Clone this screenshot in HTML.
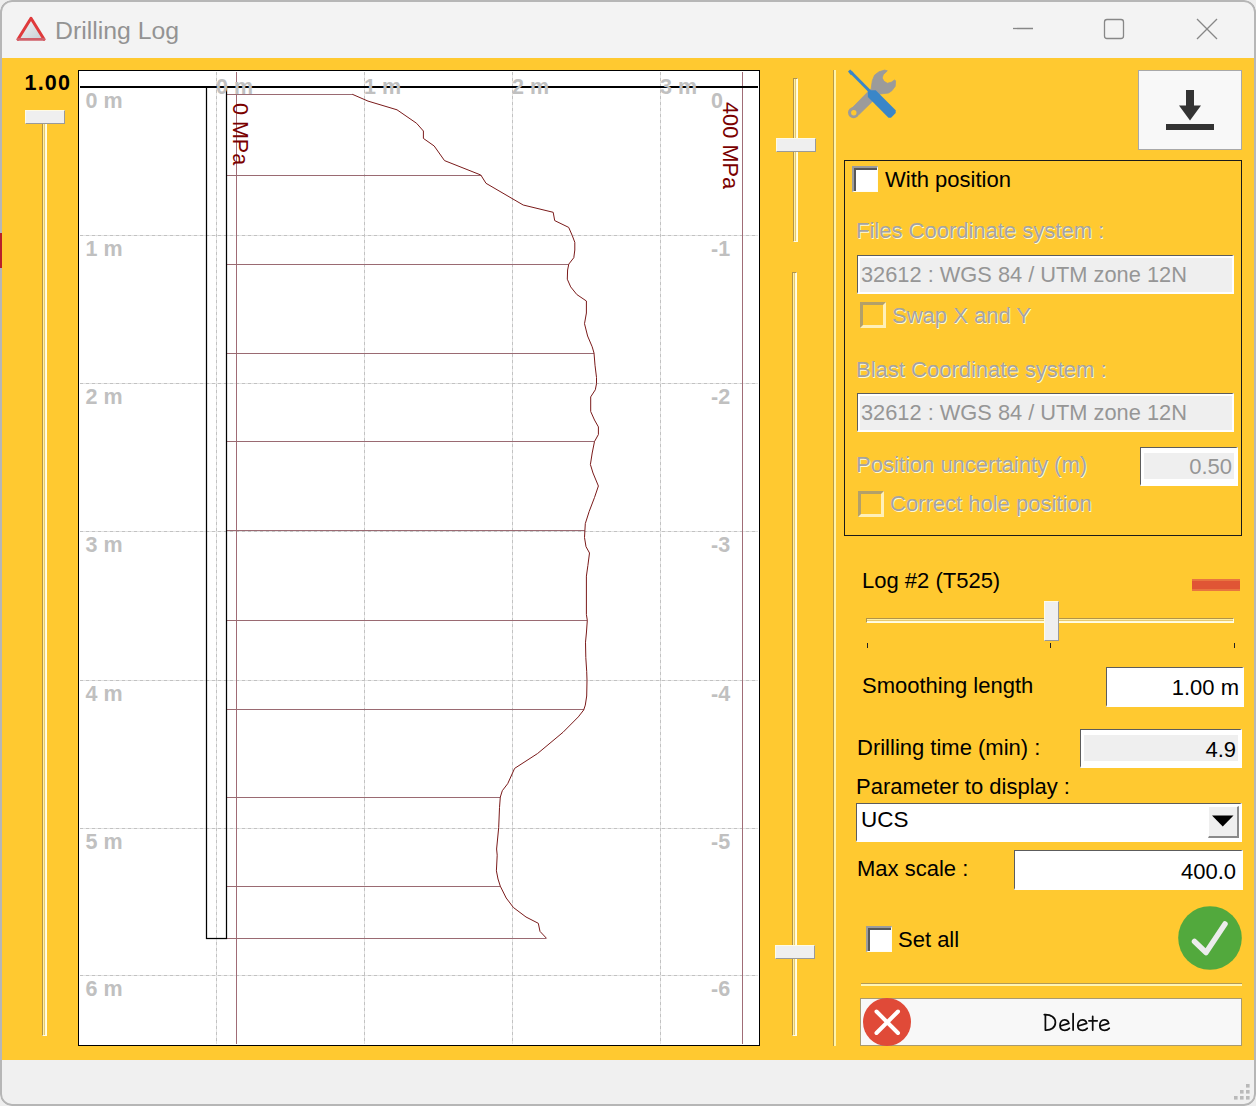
<!DOCTYPE html>
<html>
<head>
<meta charset="utf-8">
<style>
html,body{margin:0;padding:0;width:1256px;height:1106px;overflow:hidden;background:#eeeeee;}
*{box-sizing:border-box;}
body{font-family:"Liberation Sans",sans-serif;position:relative;}
.abs{position:absolute;}
#win{position:absolute;left:0;top:0;width:1256px;height:1106px;border-radius:12px;overflow:hidden;background:#f3f3f3;}
#frame{position:absolute;left:0;top:0;width:1256px;height:1106px;border:2px solid #b6b6b6;border-radius:12px;}
#title{position:absolute;left:0;top:0;width:1256px;height:58px;background:#f3f3f3;}
#body{position:absolute;left:0;top:58px;width:1256px;height:1002px;background:#ffc930;}
#status{position:absolute;left:0;top:1060px;width:1256px;height:46px;background:#f0f0f0;}
.t{position:absolute;white-space:nowrap;font-size:22px;line-height:1;color:#000;}
.dis{color:#a3a3a3;text-shadow:1px 1px 0 #fff8d8;}
.gl{position:absolute;white-space:nowrap;font-size:21.5px;font-weight:bold;color:#c0c0c0;line-height:1;}
.tb{position:absolute;background:#fff;border-top:1px solid #5c5c5c;border-left:1px solid #5c5c5c;border-bottom:2px solid #fff;border-right:2px solid #fff;box-shadow:inset 2px 2px 0 #fff;}
.cb{position:absolute;width:26px;height:26px;background:#fff;border-top:2px solid #9c9c9c;border-left:2px solid #9c9c9c;border-right:1px solid #fffef5;border-bottom:1px solid #fffef5;box-shadow:inset 2px 2px 0 #585858;}
.cbd{position:absolute;width:26px;height:26px;background:transparent;border-top:3px solid #b3a069;border-left:3px solid #b3a069;border-right:3px solid #fff0b8;border-bottom:3px solid #fff0b8;}
.trk{position:absolute;background:linear-gradient(to right,#fff0a0 0,#fff0a0 45%,#e6c870 45%,#e6c870 70%,#fffbd8 70%);border-left:1px solid #b0934a;border-top:1px solid #b0934a;border-right:1px solid #fffde8;border-bottom:1px solid #fffde8;}
.trkh{position:absolute;background:linear-gradient(to bottom,#fff0a0 0,#fff0a0 45%,#e6c870 45%,#e6c870 70%,#fffbd8 70%);border-left:1px solid #b0934a;border-top:1px solid #b0934a;border-right:1px solid #fffde8;border-bottom:1px solid #fffde8;}
.thumb{position:absolute;background:#efefef;border-top:1px solid #fffbe5;border-left:1px solid #fffbe5;border-right:1px solid #9a9a9a;border-bottom:1px solid #9a9a9a;}
</style>
</head>
<body>
<div id="win">
  <div id="title">
    <svg class="abs" style="left:0;top:0" width="60" height="58">
      <defs><linearGradient id="tg" x1="0" y1="0" x2="1" y2="1"><stop offset="0" stop-color="#f4f8fa"/><stop offset="1" stop-color="#c7ced3"/></linearGradient></defs>
      <path d="M31,18.3 L44,39.3 L18,39.3 Z" fill="url(#tg)" stroke="none"/><path d="M18,39.3 L31,18.3 L44,39.3" fill="none" stroke="#df3a3c" stroke-width="3" stroke-linejoin="round" stroke-linecap="round"/><line x1="18" y1="39.4" x2="44" y2="39.4" stroke="#d0606a" stroke-width="2.6" stroke-linecap="round"/>
    </svg>
    <div class="t" style="left:55px;top:18.5px;font-size:24.8px;color:#939393;">Drilling Log</div>
    <svg class="abs" style="left:1000px;top:0" width="256" height="58">
      <g stroke="#878787" stroke-width="1.3" fill="none">
        <line x1="13" y1="28.5" x2="33" y2="28.5"/>
        <rect x="104.5" y="19.5" width="19" height="19" rx="2.5"/>
        <line x1="197" y1="19" x2="217" y2="39"/>
        <line x1="217" y1="19" x2="197" y2="39"/>
      </g>
    </svg>
  </div>
  <div id="body"></div>
  <div id="status">
    <svg class="abs" style="left:1230px;top:20px" width="24" height="24">
      <g fill="#b9b9b9">
        <rect x="16" y="4" width="3.6" height="3.6"/>
        <rect x="10" y="10" width="3.6" height="3.6"/><rect x="16" y="10" width="3.6" height="3.6"/>
        <rect x="4" y="16" width="3.6" height="3.6"/><rect x="10" y="16" width="3.6" height="3.6"/><rect x="16" y="16" width="3.6" height="3.6"/>
      </g>
    </svg>
  </div>

  <!-- left slider -->
  <div class="t" style="left:24.5px;top:73px;font-weight:bold;font-size:21.5px;letter-spacing:1.2px;">1.00</div>
  <div class="trk" style="left:42px;top:123px;width:5px;height:913px;"></div>
  <div class="thumb" style="left:25px;top:110px;width:40px;height:14px;"></div>

  <!-- chart -->
  <div class="abs" style="left:78px;top:70px;width:682px;height:976px;background:#fff;border:1px solid #000;"></div>
  <svg class="abs" style="left:0;top:0" width="1256" height="1106">
    <g stroke="#e3e3e3" stroke-width="1"><line x1="80" y1="235.5" x2="758" y2="235.5"/><line x1="80" y1="383.5" x2="758" y2="383.5"/><line x1="80" y1="531.5" x2="758" y2="531.5"/><line x1="80" y1="680.5" x2="758" y2="680.5"/><line x1="80" y1="828.5" x2="758" y2="828.5"/><line x1="80" y1="975.5" x2="758" y2="975.5"/><line x1="216.5" y1="72" x2="216.5" y2="1044"/><line x1="364.5" y1="72" x2="364.5" y2="1044"/><line x1="512.5" y1="72" x2="512.5" y2="1044"/><line x1="660.5" y1="72" x2="660.5" y2="1044"/></g><g stroke="#c2c2c2" stroke-width="1" stroke-dasharray="3,3"><line x1="80" y1="235.5" x2="758" y2="235.5"/><line x1="80" y1="383.5" x2="758" y2="383.5"/><line x1="80" y1="531.5" x2="758" y2="531.5"/><line x1="80" y1="680.5" x2="758" y2="680.5"/><line x1="80" y1="828.5" x2="758" y2="828.5"/><line x1="80" y1="975.5" x2="758" y2="975.5"/><line x1="216.5" y1="72" x2="216.5" y2="1044"/><line x1="364.5" y1="72" x2="364.5" y2="1044"/><line x1="512.5" y1="72" x2="512.5" y2="1044"/><line x1="660.5" y1="72" x2="660.5" y2="1044"/></g>
    <line x1="236.5" y1="72" x2="236.5" y2="1044" stroke="#a06c76" stroke-width="1"/>
    <line x1="742.5" y1="72" x2="742.5" y2="1044" stroke="#a06c76" stroke-width="1"/>
    <g stroke="#9a6a72" stroke-width="1"><line x1="226" y1="94.5" x2="352.9" y2="94.5"/><line x1="226" y1="175.5" x2="481.1" y2="175.5"/><line x1="226" y1="264.5" x2="568.7" y2="264.5"/><line x1="226" y1="353.5" x2="594.0" y2="353.5"/><line x1="226" y1="441.5" x2="594.5" y2="441.5"/><line x1="226" y1="530.5" x2="584.9" y2="530.5"/><line x1="226" y1="620.5" x2="587.3" y2="620.5"/><line x1="226" y1="709.5" x2="583.9" y2="709.5"/><line x1="226" y1="797.5" x2="500.3" y2="797.5"/><line x1="226" y1="886.5" x2="500.4" y2="886.5"/><line x1="226" y1="938.5" x2="546.4" y2="938.5"/></g>
    <polyline points="352.4,94.3 368.0,101.1 397.0,109.8 416.6,123.3 423.4,131.0 423.4,138.4 434.2,146.0 444.5,160.6 480.8,175.0 486.0,183.3 523.2,205.0 553.2,212.3 554.7,220.6 568.7,227.4 572.2,235.4 574.8,242.3 574.8,250.0 573.8,257.7 568.8,264.1 567.6,270.0 567.3,279.2 570.7,286.9 576.8,294.5 586.4,301.0 586.4,313.0 584.5,323.7 587.6,336.0 592.2,346.8 594.0,353.0 595.0,365.2 596.5,377.5 596.5,383.7 595.3,389.8 590.7,396.9 590.7,411.5 594.5,420.0 598.4,426.9 598.4,434.5 594.5,441.5 592.2,453.0 590.4,464.5 593.0,473.0 598.4,486.0 594.5,497.5 589.2,511.4 585.3,523.6 584.9,530.6 584.5,537.5 586.0,546.7 589.5,553.0 587.9,565.4 586.4,576.1 586.4,614.5 587.3,620.4 586.4,633.0 585.5,642.2 585.8,657.5 586.7,671.4 587.0,680.3 586.7,696.0 585.3,705.1 583.7,710.0 578.3,716.9 563.0,732.3 537.6,753.5 514.6,768.4 507.7,783.7 502.3,790.7 500.3,797.1 499.5,807.6 498.7,827.5 496.6,849.0 497.2,855.2 496.4,870.8 498.0,879.0 500.3,886.2 506.2,898.0 513.4,907.5 526.0,917.0 538.3,923.3 540.0,931.4 546.4,938.2" fill="none" stroke="#7a1a1a" stroke-width="1" stroke-linejoin="round"/>
    <rect x="206.5" y="87" width="20" height="851.5" fill="none" stroke="#000" stroke-width="1.25"/>
    <line x1="80" y1="87" x2="758" y2="87" stroke="#000" stroke-width="2"/>
  </svg>
  <div class="gl" style="left:85.5px;top:90.5px">0 m</div><div class="gl" style="left:85.5px;top:238.5px">1 m</div><div class="gl" style="left:85.5px;top:386.5px">2 m</div><div class="gl" style="left:85.5px;top:534.5px">3 m</div><div class="gl" style="left:85.5px;top:683.5px">4 m</div><div class="gl" style="left:85.5px;top:831.5px">5 m</div><div class="gl" style="left:85.5px;top:978.5px">6 m</div>
  <div class="gl" style="left:711px;top:90.5px">0</div><div class="gl" style="left:711px;top:238.5px">-1</div><div class="gl" style="left:711px;top:386.5px">-2</div><div class="gl" style="left:711px;top:534.5px">-3</div><div class="gl" style="left:711px;top:683.5px">-4</div><div class="gl" style="left:711px;top:831.5px">-5</div><div class="gl" style="left:711px;top:978.5px">-6</div>
  <div class="gl" style="left:216px;top:76.5px">0 m</div><div class="gl" style="left:364px;top:76.5px">1 m</div><div class="gl" style="left:512px;top:76.5px">2 m</div><div class="gl" style="left:660px;top:76.5px">3 m</div>
  <div class="t" style="left:229px;top:103px;font-size:21.5px;color:#7a0000;transform-origin:0 0;transform:translate(21px,0) rotate(90deg);">0 MPa</div>
  <div class="t" style="left:719.5px;top:102px;font-size:21.8px;color:#7a0000;transform-origin:0 0;transform:translate(21px,0) rotate(90deg);">400 MPa</div>

  <!-- right sliders -->
  <div class="trk" style="left:793px;top:78px;width:5px;height:164px;"></div>
  <div class="thumb" style="left:776px;top:138px;width:40px;height:14px;"></div>
  <div class="trk" style="left:792px;top:272px;width:5px;height:764px;"></div>
  <div class="thumb" style="left:775px;top:945px;width:40px;height:14px;"></div>
  <div class="abs" style="left:833px;top:70px;width:3px;height:976px;border-left:1px solid #b89a45;background:#fff3a8;"></div>

  <!-- tools icon -->
  <svg class="abs" style="left:846px;top:68px" width="52" height="52" viewBox="0 0 52 52">
    <path d="M38.6,2.1 L41.3,2.8 L37.2,6.8 L36.2,10 L38,13.3 L41.4,15.3 L45.3,14.2 L48.6,12 L49.6,12.8 L49.2,18.3 L45.8,22.8 L42.5,25 L34,26 L13,46.5 L6,40 L25.2,20.5 L26.3,12.7 L28.6,7.1 L33,3.8 Z" fill="#9b9b9b" stroke="#9b9b9b" stroke-width="0.8" stroke-linejoin="round"/>
    <circle cx="7.6" cy="44.6" r="5.6" fill="#9b9b9b"/>
    <circle cx="7.8" cy="44.8" r="2.7" fill="#ffc930"/>
    <line x1="4.5" y1="3.8" x2="24" y2="23.5" stroke="#3a86c8" stroke-width="3"/>
    <path d="M2,3.6 L4.2,1.6 L7.4,4.8 L5,7.2 Z" fill="#3a86c8"/>
    <path d="M21.9,22.2 L29.7,22.2 L49.7,42.3 L49.7,45 L45,49.8 L42.5,49.8 L21.9,28.9 Z" fill="#3a86c8"/>
  </svg>

  <!-- download button -->
  <div class="abs" style="left:1138px;top:70px;width:104px;height:80px;background:#f8f8f8;border:1px solid #a8a8a8;"></div>
  <svg class="abs" style="left:1138px;top:70px" width="104" height="80">
    <rect x="48" y="20" width="8" height="17" fill="#333"/>
    <path d="M41,35.5 L63,35.5 L52,50.5 Z" fill="#333"/>
    <rect x="28" y="54" width="48" height="6" fill="#333"/>
  </svg>

  <!-- group box -->
  <div class="abs" style="left:844px;top:160px;width:398px;height:376px;border:1px solid #1a1a1a;"></div>
  <div class="cb" style="left:852px;top:166px;"></div>
  <div class="t" style="left:885px;top:169px;">With position</div>
  <div class="t dis" style="left:856px;top:220px;">Files Coordinate system :</div>
  <div class="tb" style="left:857px;top:255px;width:377px;height:39px;background:#efefef;"></div>
  <div class="t" style="left:861px;top:264px;color:#969696;font-size:21.8px;">32612 : WGS 84 / UTM zone 12N</div>
  <div class="cbd" style="left:860px;top:302px;"></div>
  <div class="t dis" style="left:892px;top:305px;">Swap X and Y</div>
  <div class="t dis" style="left:856px;top:359px;">Blast Coordinate system :</div>
  <div class="tb" style="left:857px;top:393px;width:377px;height:39px;background:#efefef;"></div>
  <div class="t" style="left:861px;top:402px;color:#969696;font-size:21.8px;">32612 : WGS 84 / UTM zone 12N</div>
  <div class="t dis" style="left:856px;top:454px;">Position uncertainty (m)</div>
  <div class="tb" style="left:1140px;top:447px;width:98px;height:39px;"></div>
  <div class="abs" style="left:1144px;top:453px;width:90px;height:26px;background:#efefef;"></div>
  <div class="t" style="left:1140px;top:456px;width:92px;text-align:right;color:#969696;">0.50</div>
  <div class="cbd" style="left:858px;top:491px;"></div>
  <div class="t dis" style="left:890px;top:493px;">Correct hole position</div>

  <!-- log slider -->
  <div class="t" style="left:862px;top:570px;">Log #2 (T525)</div>
  <div class="abs" style="left:1192px;top:579px;width:48px;height:12px;background:#e05535;border-top:2px solid #e8753f;border-bottom:2px solid #e8753f;"></div>
  <div class="trkh" style="left:866px;top:618px;width:368px;height:5px;"></div>
  <div class="thumb" style="left:1044px;top:601px;width:15px;height:40px;"></div>
  <div class="abs" style="left:867px;top:643px;width:1px;height:5px;background:#222;"></div>
  <div class="abs" style="left:1050px;top:643px;width:1px;height:5px;background:#222;"></div>
  <div class="abs" style="left:1234px;top:643px;width:1px;height:5px;background:#222;"></div>

  <div class="t" style="left:862px;top:675px;">Smoothing length</div>
  <div class="tb" style="left:1106px;top:667px;width:138px;height:40px;"></div>
  <div class="t" style="left:1106px;top:677px;width:133px;text-align:right;">1.00 m</div>

  <div class="t" style="left:857px;top:737px;">Drilling time (min) :</div>
  <div class="tb" style="left:1080px;top:729px;width:162px;height:39px;"></div>
  <div class="abs" style="left:1084px;top:735px;width:154px;height:26px;background:#efefef;"></div>
  <div class="t" style="left:1080px;top:739px;width:156px;text-align:right;">4.9</div>

  <div class="t" style="left:856px;top:776px;">Parameter to display :</div>
  <div class="tb" style="left:856px;top:803px;width:386px;height:39px;"></div>
  <div class="t" style="left:861px;top:809px;font-size:22.5px;">UCS</div>
  <div class="abs" style="left:1208px;top:806px;width:31px;height:32px;background:#efefef;border-top:1px solid #fff;border-left:1px solid #fff;border-right:2px solid #8a8a8a;border-bottom:2px solid #8a8a8a;"></div>
  <svg class="abs" style="left:1208px;top:806px" width="31" height="32"><path d="M4,9.5 L25.5,9.5 L14.75,20.5 Z" fill="#000"/></svg>

  <div class="t" style="left:857px;top:858px;">Max scale :</div>
  <div class="tb" style="left:1014px;top:850px;width:229px;height:40px;"></div>
  <div class="t" style="left:1014px;top:861px;width:222px;text-align:right;">400.0</div>

  <div class="cb" style="left:866px;top:926px;"></div>
  <div class="t" style="left:898px;top:929px;">Set all</div>
  <svg class="abs" style="left:1176px;top:904px" width="68" height="68">
    <circle cx="34" cy="34" r="31.8" fill="#52a93d"/>
    <path d="M18.5,37.5 L30,48.5 L49,20" fill="none" stroke="#ececec" stroke-width="5.5" stroke-linecap="round" stroke-linejoin="round"/>
  </svg>

  <div class="abs" style="left:861px;top:983px;width:381px;height:3px;border-top:1px solid #b39a55;background:#fff5b5;"></div>

  <div class="abs" style="left:860px;top:998px;width:382px;height:48px;background:#f8f8f8;border:1px solid #a89a70;"></div>
  <svg class="abs" style="left:860px;top:998px" width="60" height="48">
    <circle cx="27" cy="24" r="24" fill="#e04a38"/>
    <path d="M16.5,13.5 L38,35 M38,13.5 L16.5,35" stroke="#fff" stroke-width="4" stroke-linecap="round"/>
  </svg>
  <svg class="abs" style="left:0;top:0" width="1256" height="1106"><path d="M1045.4,1015.2 L1045.4,1030 M1044.3,1014.6 C1051.5,1014.2 1055.4,1018 1055.4,1022.4 C1055.4,1027.3 1051.2,1030.4 1045.4,1030.1 M1060.4,1026 L1068.8,1023.3 C1068.2,1020.6 1066.4,1019.9 1064.6,1019.9 C1061.6,1019.9 1060.0,1022.5 1060.0,1025.5 C1060.0,1028.6 1062.2,1030.3 1064.8,1030.3 C1066.8,1030.3 1068.3,1029.5 1069.4,1028.3 M1073.1,1013.6 L1073.1,1030.1 M1078.2,1026 L1086.6,1023.3 C1086.0,1020.6 1084.2,1019.9 1082.4,1019.9 C1079.4,1019.9 1077.8,1022.5 1077.8,1025.5 C1077.8,1028.6 1080.0,1030.3 1082.6,1030.3 C1084.6,1030.3 1086.1,1029.5 1087.2,1028.3 M1092.7,1016.4 L1092.7,1030.1 M1088.9,1020.8 L1097.2,1020.8 M1100.2,1026 L1108.6,1023.3 C1108.0,1020.6 1106.2,1019.9 1104.4,1019.9 C1101.4,1019.9 1099.8,1022.5 1099.8,1025.5 C1099.8,1028.6 1102.0,1030.3 1104.6,1030.3 C1106.6,1030.3 1108.1,1029.5 1109.2,1028.3 " fill="none" stroke="#0c0c0c" stroke-width="1.75" stroke-linecap="round" stroke-linejoin="round"/></svg>
<div id="frame"></div>
<div class="abs" style="left:0;top:233px;width:2px;height:35px;background:#b8202a;"></div>
</div>
</body>
</html>
